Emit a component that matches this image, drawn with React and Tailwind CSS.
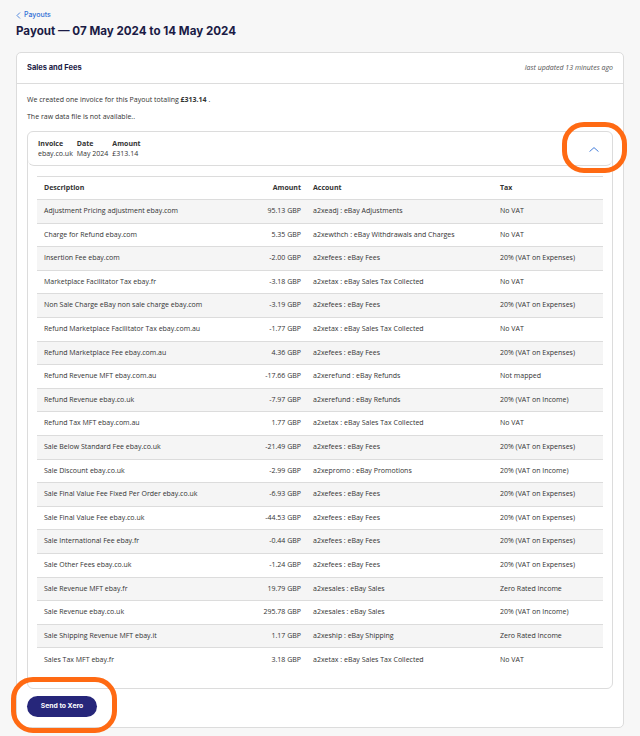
const rows = [
  ['Adjustment Pricing adjustment ebay.com', '95.13 GBP', 'a2xeadj : eBay Adjustments', 'No VAT'],
  ['Charge for Refund ebay.com', '5.35 GBP', 'a2xewthch : eBay Withdrawals and Charges', 'No VAT'],
  ['Insertion Fee ebay.com', '-2.00 GBP', 'a2xefees : eBay Fees', '20% (VAT on Expenses)'],
  ['Marketplace Facilitator Tax ebay.fr', '-3.18 GBP', 'a2xetax : eBay Sales Tax Collected', 'No VAT'],
  ['Non Sale Charge eBay non sale charge ebay.com', '-3.19 GBP', 'a2xefees : eBay Fees', '20% (VAT on Expenses)'],
  ['Refund Marketplace Facilitator Tax ebay.com.au', '-1.77 GBP', 'a2xetax : eBay Sales Tax Collected', 'No VAT'],
  ['Refund Marketplace Fee ebay.com.au', '4.36 GBP', 'a2xefees : eBay Fees', '20% (VAT on Expenses)'],
  ['Refund Revenue MFT ebay.com.au', '-17.66 GBP', 'a2xerefund : eBay Refunds', 'Not mapped'],
  ['Refund Revenue ebay.co.uk', '-7.97 GBP', 'a2xerefund : eBay Refunds', '20% (VAT on Income)'],
  ['Refund Tax MFT ebay.com.au', '1.77 GBP', 'a2xetax : eBay Sales Tax Collected', 'No VAT'],
  ['Sale Below Standard Fee ebay.co.uk', '-21.49 GBP', 'a2xefees : eBay Fees', '20% (VAT on Expenses)'],
  ['Sale Discount ebay.co.uk', '-2.99 GBP', 'a2xepromo : eBay Promotions', '20% (VAT on Income)'],
  ['Sale Final Value Fee Fixed Per Order ebay.co.uk', '-6.93 GBP', 'a2xefees : eBay Fees', '20% (VAT on Expenses)'],
  ['Sale Final Value Fee ebay.co.uk', '-44.53 GBP', 'a2xefees : eBay Fees', '20% (VAT on Expenses)'],
  ['Sale International Fee ebay.fr', '-0.44 GBP', 'a2xefees : eBay Fees', '20% (VAT on Expenses)'],
  ['Sale Other Fees ebay.co.uk', '-1.24 GBP', 'a2xefees : eBay Fees', '20% (VAT on Expenses)'],
  ['Sale Revenue MFT ebay.fr', '19.79 GBP', 'a2xesales : eBay Sales', 'Zero Rated Income'],
  ['Sale Revenue ebay.co.uk', '295.78 GBP', 'a2xesales : eBay Sales', '20% (VAT on Income)'],
  ['Sale Shipping Revenue MFT ebay.it', '1.17 GBP', 'a2xeship : eBay Shipping', 'Zero Rated Income'],
  ['Sales Tax MFT ebay.fr', '3.18 GBP', 'a2xetax : eBay Sales Tax Collected', 'No VAT'],
]

const cols = 'grid grid-cols-[200px_70px_187px_1fr]'

function App() {
  return (
    <div className="relative min-h-[736px] bg-[#f7f7f7] px-4 pt-[10px] font-['Open_Sans',sans-serif] text-[#333]">
      <div className="flex items-center gap-[3px] text-[7px] leading-[10px] text-[#2f6fd6]">
        <svg width="5" height="7" viewBox="0 0 5 7" fill="none" stroke="currentColor" strokeWidth="0.8">
          <path d="M4 0.5 L1 3.5 L4 6.5" />
        </svg>
        <span className="font-['Inter',sans-serif] font-medium">Payouts</span>
      </div>
      <h1 className="mt-[3px] font-['Inter',sans-serif] text-[11.6px] leading-[16px] font-bold text-[#1b1b45]">
        Payout — 07 May 2024 to 14 May 2024
      </h1>

      <div className="mt-[13px] rounded-[5px] border border-[#dcdcdc] bg-white">
        <div className="flex h-[31px] items-center justify-between border-b border-[#dcdcdc] px-[10px]">
          <span className="font-['Inter',sans-serif] text-[7.5px] font-bold text-[#1b1b45]">Sales and Fees</span>
          <span className="text-[7px] italic text-[#555]">last updated 13 minutes ago</span>
        </div>

        <div className="px-[10px] pt-[11px] pb-[10px]">
          <p className="text-[7px] leading-[10px]">
            We created one invoice for this Payout totaling <b>£313.14</b> .
          </p>
          <p className="mt-[7px] text-[7px] leading-[10px]">The raw data file is not available..</p>

          <div className="mt-[9px] rounded-[6px] border border-[#dcdcdc]">
            <div className="flex h-[34px] items-center justify-between rounded-b-[6px] border-b border-[#dcdcdc] pl-[10px] pr-[13px]">
              <div className="flex gap-[4px] text-[7px] leading-[10px]">
                <div className="flex flex-col">
                  <span className="font-bold">Invoice</span>
                  <span>ebay.co.uk</span>
                </div>
                <div className="flex flex-col">
                  <span className="font-bold">Date</span>
                  <span>May 2024</span>
                </div>
                <div className="flex flex-col">
                  <span className="font-bold">Amount</span>
                  <span>£313.14</span>
                </div>
              </div>
              <svg className="mt-[2px]" width="10" height="5" viewBox="0 0 10 5" fill="none" stroke="#2f6fd6" strokeWidth="0.9">
                <path d="M0.5 4.6 L5 0.6 L9.5 4.6" />
              </svg>
            </div>

            <div className="mx-[9px] mt-[10px] mb-[16px] border-t border-[#dcdcdc] text-[7px]">
              <div className={`${cols} h-[23px] items-center border-b border-[#dcdcdc] font-bold`}>
                <span className="pl-[7px]">Description</span>
                <span className="pr-[6px] text-right">Amount</span>
                <span className="pl-[6px]">Account</span>
                <span className="pl-[6px]">Tax</span>
              </div>
              {rows.map((r, i) => (
                <div
                  key={i}
                  className={`${cols} h-[23.6px] items-center ${i < rows.length - 1 ? 'border-b border-[#dcdcdc]' : ''} ${i % 2 === 0 ? 'bg-[#f5f5f5]' : 'bg-white'}`}
                >
                  <span className="pl-[7px]">{r[0]}</span>
                  <span className="pr-[6px] text-right">{r[1]}</span>
                  <span className="pl-[6px]">{r[2]}</span>
                  <span className="pl-[6px]">{r[3]}</span>
                </div>
              ))}
            </div>
          </div>

          <button className="mt-[7px] h-[21px] w-[70px] rounded-full bg-[#26267a] font-['Inter',sans-serif] text-[6.8px] font-bold text-white">
            Send to Xero
          </button>
        </div>
      </div>

      <div className="pointer-events-none absolute left-[562px] top-[122px] h-[51px] w-[65px] rounded-[22px] border-[5px] border-[#ff6a13]" />
      <div className="pointer-events-none absolute left-[11px] top-[677px] h-[56px] w-[106px] rounded-[22px] border-[5px] border-[#ff6a13]" />
    </div>
  )
}

export default App
